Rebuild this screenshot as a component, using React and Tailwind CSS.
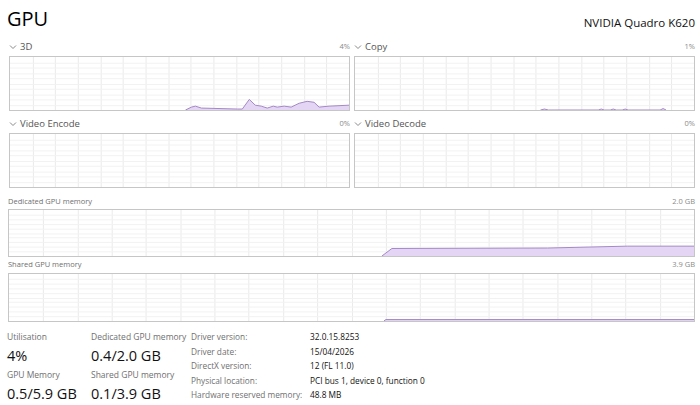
const FONT = { fontFamily: '"Open Sans", "Noto Sans", sans-serif' }

// 3D engine usage trace, in chart-local units (340 x 55)
const threeD = [
  [0, 55], [176, 55], [182, 52], [186, 51], [192, 53], [228, 54], [233, 54],
  [240, 44], [246, 50], [252, 51], [258, 53], [264, 51], [268, 52], [275, 51],
  [282, 52], [290, 48], [298, 46], [305, 47], [310, 52], [320, 51], [340, 50], [340, 55],
]

const copy = [
  [0, 55], [186, 55], [190, 54], [194, 55], [244, 55], [247, 54], [250, 55],
  [256, 55], [259, 54], [262, 55], [268, 55], [271, 54], [274, 55],
  [306, 55], [309, 53.5], [312, 55], [340, 55],
]

const dedicated = [
  [0, 49], [374, 49], [384, 41], [540, 40.5], [620, 38.5], [687, 38.5], [687, 49],
]

const shared = [
  [0, 49], [376, 49], [378, 47.5], [687, 47.5], [687, 49],
]

function Grid({ w, h, cols, rows = 10 }) {
  const lines = []
  for (let i = 1; i < cols; i++) {
    const x = Math.round((w / cols) * i) + 0.5
    lines.push(<line key={'v' + i} x1={x} y1={0} x2={x} y2={h} stroke="#e9e9e9" strokeWidth="1" />)
  }
  for (let j = 1; j < rows; j++) {
    const y = Math.round((h / rows) * j) + 0.5
    lines.push(<line key={'h' + j} x1={0} y1={y} x2={w} y2={y} stroke="#f2f2f2" strokeWidth="1" />)
  }
  return <g>{lines}</g>
}

function Chart({ w, h, cols, points, heightClass }) {
  const d = points ? 'M' + points.map(p => p.join(',')).join(' L') + ' Z' : null
  const line = points ? 'M' + points.slice(1, -1).map(p => p.join(',')).join(' L') : null
  return (
    <div className={`border border-[#c6c6c6] bg-white ${heightClass}`}>
      <svg width="100%" height="100%" viewBox={`0 0 ${w} ${h}`} preserveAspectRatio="none" className="block">
        <Grid w={w} h={h} cols={cols} />
        {d && <path d={d} fill="#e4d5f5" />}
        {line && <path d={line} fill="none" stroke="#a286c4" strokeWidth="1" />}
      </svg>
    </div>
  )
}

function Chevron() {
  return (
    <svg width="8" height="6" viewBox="0 0 8 6" className="mr-[3px]">
      <path d="M1 1.5 L4 4.5 L7 1.5" fill="none" stroke="#8a8a8a" strokeWidth="1" />
    </svg>
  )
}

function Engine({ name, pct, points }) {
  return (
    <div className="flex flex-col">
      <div className="flex h-[18px] items-center justify-between">
        <div className="flex items-center text-[9.5px] text-[#555]">
          <Chevron />
          {name}
        </div>
        <span className="text-[7.5px] text-[#8a8a8a]">{pct}</span>
      </div>
      <Chart w={340} h={55} cols={15} points={points} heightClass="h-[55px]" />
    </div>
  )
}

function Stat({ label, value }) {
  return (
    <div className="flex flex-col whitespace-nowrap">
      <span className="text-[8.5px] leading-[16px] text-[#6f6f6f]">{label}</span>
      <span className="text-[14.5px] leading-[22px] text-[#111]">{value}</span>
    </div>
  )
}

const details = [
  ['Driver version:', '32.0.15.8253'],
  ['Driver date:', '15/04/2026'],
  ['DirectX version:', '12 (FL 11.0)'],
  ['Physical location:', 'PCI bus 1, device 0, function 0'],
  ['Hardware reserved memory:', '48.8 MB'],
]

export default function App() {
  return (
    <div className="h-[405px] w-[700px] overflow-hidden bg-white pl-[7px] pr-[5px]" style={FONT}>
      {/* title row */}
      <div className="flex h-[38px] items-end justify-between pb-[6px]">
        <span className="text-[20px] leading-[26px] text-black">GPU</span>
        <span className="text-[11.5px] leading-[18px] text-[#111]">NVIDIA Quadro K620</span>
      </div>

      {/* engine charts */}
      <div className="grid grid-cols-[341px_341px] gap-x-[4px] gap-y-[4px] pl-[2px]">
        <Engine name="3D" pct="4%" points={threeD} />
        <Engine name="Copy" pct="1%" points={copy} />
        <Engine name="Video Encode" pct="0%" />
        <Engine name="Video Decode" pct="0%" />
      </div>

      {/* memory charts */}
      <div className="mt-[6px] flex h-[15px] items-center justify-between pl-[1px]">
        <span className="text-[7.5px] text-[#6f6f6f]">Dedicated GPU memory</span>
        <span className="text-[7.5px] text-[#8a8a8a]">2.0 GB</span>
      </div>
      <div className="pl-[1px]">
        <Chart w={687} h={49} cols={20} points={dedicated} heightClass="h-[48px]" />
      </div>
      <div className="flex h-[16px] items-center justify-between pl-[1px]">
        <span className="text-[7.5px] text-[#6f6f6f]">Shared GPU memory</span>
        <span className="text-[7.5px] text-[#8a8a8a]">3.9 GB</span>
      </div>
      <div className="pl-[1px]">
        <Chart w={687} h={49} cols={20} points={shared} heightClass="h-[49px]" />
      </div>

      {/* summary */}
      <div className="mt-[7px] flex">
        <div className="grid w-[184px] grid-cols-[84px_100px]">
          <Stat label="Utilisation" value="4%" />
          <Stat label="Dedicated GPU memory" value="0.4/2.0 GB" />
          <Stat label="GPU Memory" value="0.5/5.9 GB" />
          <Stat label="Shared GPU memory" value="0.1/3.9 GB" />
        </div>
        <div className="flex flex-col pt-[1px]">
          {details.map(([k, v]) => (
            <div key={k} className="flex h-[14.5px] items-center whitespace-nowrap text-[8.3px]">
              <span className="w-[119px] text-[#6f6f6f]">{k}</span>
              <span className="text-[#111]">{v}</span>
            </div>
          ))}
        </div>
      </div>
    </div>
  )
}
